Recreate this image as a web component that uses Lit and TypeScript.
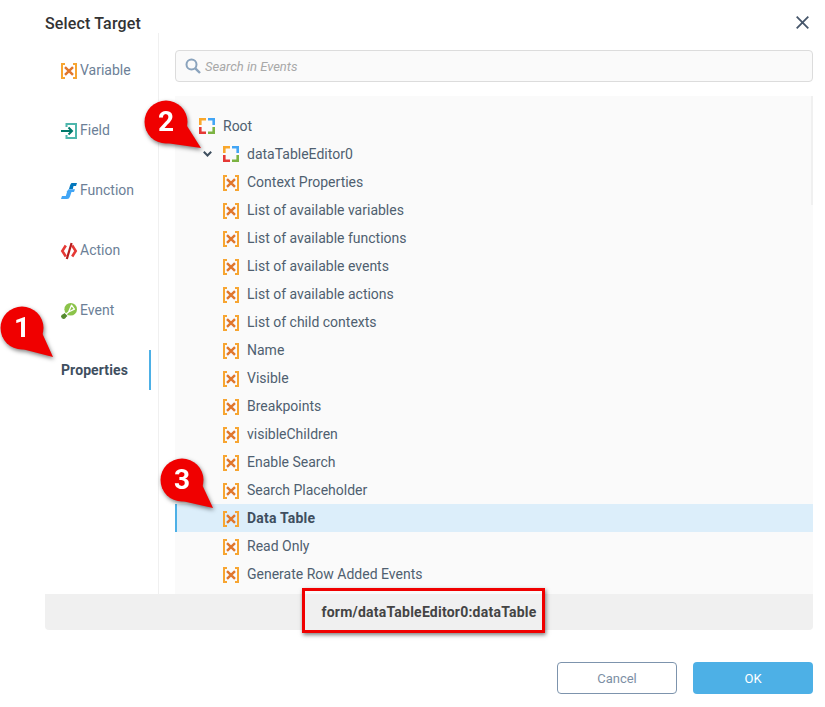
import { LitElement, html, css, svg } from "lit";
import { customElement } from "lit/decorators.js";

const varIcon = svg`<path d="M4 1H1v14h3M12 1h3v14h-3" fill="none" stroke="#f7a531" stroke-width="2"/><path d="M4 4.200l8 7.600M12 4.200l-8 7.600" fill="none" stroke="#e0762c" stroke-width="2.500"/>`;
const ctxIcon = svg`<path d="M0 7V0h7v2.600H2.600V7z" fill="#f9a72b"/><path d="M9 0h7v7h-2.600V2.600H9z" fill="#42a5f5"/><path d="M0 9h2.600v4.400H7V16H0z" fill="#e53935"/><path d="M13.400 9H16v7H9v-2.600h4.400z" fill="#7cb342"/>`;
const fieldIcon = svg`<path d="M5.500 4V1h9.500v14H5.500v-3" fill="none" stroke="#4db6ac" stroke-width="2"/><path d="M0 8h10" stroke="#00796b" stroke-width="2"/><path d="M7.500 4.500L11 8l-3.500 3.500" fill="none" stroke="#00796b" stroke-width="2"/>`;
const fnIcon = svg`<path d="M10.500 0H16l-1 3h-2.500l-.7 3H8l1-3.500Q9.600.6 10.500 0z" fill="#0277bd"/><path d="M7.500 6.200H14L13 9h-2.500L9 13.500Q8.300 16 6 16H0l1-3h3.800L6 9h-.5z" fill="#42a5f5"/>`;
const actIcon = svg`<path d="M4.800 2.500L1.300 8l3.500 5.500" fill="none" stroke="#e53935" stroke-width="2.600"/><path d="M11.200 2.500L14.700 8l-3.500 5.500" fill="none" stroke="#e53935" stroke-width="2.600"/><path d="M10.600 0L5.800 16" stroke="#b71c1c" stroke-width="2.200"/>`;
const evtIcon = svg`<circle cx="9.700" cy="6.300" r="6.300" fill="#8bc34a"/><path d="M10.500 2.200L7.600 9 13.400 6.200zM7.600 9L4.500 11.500" stroke="#fff" stroke-width="1.300" fill="none" stroke-linejoin="round"/><path d="M3.500 10l3 3-3.500 2.800-3-2.500z" fill="#558b2f"/><circle cx="2.600" cy="13.600" r="2.400" fill="#558b2f"/>`;

const tabs = [
  ["Variable", varIcon],
  ["Field", fieldIcon],
  ["Function", fnIcon],
  ["Action", actIcon],
  ["Event", evtIcon],
  ["Properties", null],
] as const;

const rows = [
  "Context Properties",
  "List of available variables",
  "List of available functions",
  "List of available events",
  "List of available actions",
  "List of child contexts",
  "Name",
  "Visible",
  "Breakpoints",
  "visibleChildren",
  "Enable Search",
  "Search Placeholder",
  "Data Table",
  "Read Only",
  "Generate Row Added Events",
];

const icon = (c: unknown, box = "0 -1 16 16") =>
  html`<svg class="icon" width="16" height="16" viewBox="${box}">${c}</svg>`;

const badge = (cls: string, n: string, tail: string) => html`<svg
  class="badge ${cls}"
  width="74"
  height="74"
  viewBox="0 0 74 74"
>
  <path d="${tail}" fill="#f00000" />
  <circle cx="24" cy="24" r="21.500" fill="#f00000" />
  <text x="24" y="33" text-anchor="middle">${n}</text>
</svg>`;

@customElement("app-root")
export class AppRoot extends LitElement {
  static styles = css`
    :host {
      display: block;
      position: relative;
      width: 825px;
      height: 707px;
      overflow: hidden;
      background: #fff;
      font-family: Roboto, "Liberation Sans", sans-serif;
    }
    .dialog {
      display: flex;
      flex-direction: column;
      height: 100%;
      box-sizing: border-box;
      padding: 0 12px 0 45px;
    }
    header {
      height: 33px;
      box-sizing: border-box;
      padding-top: 14px;
      display: flex;
      justify-content: space-between;
      align-items: flex-start;
    }
    h1 {
      margin: 0;
      font-size: 16px;
      line-height: 20px;
      font-weight: 500;
      letter-spacing: 0.15px;
      color: #333;
    }
    .close {
      display: block;
      margin: 2px 4px 0 0;
    }
    .icon {
      flex: none;
      overflow: visible;
    }
    .body {
      display: flex;
      height: 561px;
    }
    .side {
      width: 113px;
      flex: none;
      box-sizing: content-box;
      border-right: 1px solid #f0f0f0;
      padding-top: 17px;
      display: flex;
      flex-direction: column;
      gap: 20px;
    }
    .tab {
      width: 106px;
      height: 40px;
      box-sizing: border-box;
      padding-left: 16px;
      display: flex;
      align-items: center;
      gap: 3px;
      font-size: 14px;
      color: #6c7f97;
    }
    .tab.on {
      font-weight: 700;
      letter-spacing: 0.1px;
      color: #3f4f5f;
      border-right: 2px solid #4db0e6;
    }
    .main {
      flex: 1;
      min-width: 0;
      margin-left: 16px;
      padding-top: 17px;
      display: flex;
      flex-direction: column;
      gap: 14px;
    }
    .search {
      height: 32px;
      flex: none;
      box-sizing: border-box;
      border: 1px solid #dcdcdc;
      border-radius: 4px;
      background: #fafafa;
      display: flex;
      align-items: center;
      gap: 4px;
      padding-left: 9px;
      font-size: 13px;
      font-style: italic;
      color: #a8a8a8;
    }
    .tree {
      flex: 1;
      min-height: 0;
      position: relative;
      overflow: hidden;
      background: #fafafa;
      padding-top: 16px;
      box-sizing: border-box;
    }
    .thumb {
      position: absolute;
      right: 0;
      top: 0;
      width: 2px;
      height: 109px;
      background: #f0f0f0;
    }
    .row {
      height: 28px;
      box-sizing: border-box;
      display: flex;
      align-items: center;
      gap: 8px;
      padding-left: 48px;
      font-size: 14px;
      color: #4f5f70;
    }
    .row.root {
      padding-left: 24px;
    }
    .row.open {
      padding-left: 28px;
      gap: 0;
    }
    .row.open .chev {
      flex: none;
    }
    .row.open .icon {
      margin: 0 8px 0 11px;
    }
    .row.sel {
      background: #dceefa;
      border-left: 2px solid #4db0e6;
      padding-left: 46px;
      font-weight: 700;
      letter-spacing: 0.2px;
      color: #3f4f5f;
    }
    .path {
      height: 36px;
      flex: none;
      background: #f0f0f0;
      border-radius: 0 0 4px 4px;
      display: flex;
      align-items: center;
      justify-content: center;
      font-size: 14px;
      font-weight: 700;
      letter-spacing: 0.23px;
      color: #444;
    }
    .actions {
      margin-top: 32px;
      display: flex;
      justify-content: flex-end;
      gap: 16px;
    }
    button {
      width: 120px;
      height: 32px;
      border-radius: 4px;
      font: 400 13px Roboto, "Liberation Sans", sans-serif;
      padding: 0;
    }
    .cancel {
      background: #fff;
      border: 1px solid #7d94ad;
      color: #7d8fa5;
    }
    .ok {
      background: #4db0e6;
      border: none;
      color: #fff;
    }
    .badge {
      position: absolute;
      overflow: visible;
      filter: drop-shadow(1px 2px 2px rgba(0, 0, 0, 0.5));
    }
    .badge text {
      font: 700 28px Roboto, "Liberation Sans", sans-serif;
      fill: #fff;
    }
    .b1 {
      left: -2px;
      top: 304px;
    }
    .b2 {
      left: 142px;
      top: 98px;
    }
    .b3 {
      left: 158px;
      top: 456px;
    }
    .redbox {
      position: absolute;
      left: 302px;
      top: 588px;
      width: 243px;
      height: 45px;
      box-sizing: border-box;
      border: 3px solid #f00000;
      box-shadow: 1px 2px 4px rgba(0, 0, 0, 0.5);
    }
  `;

  render() {
    return html`
      <div class="dialog">
        <header>
          <h1>Select Target</h1>
          <svg class="close" width="13" height="13" viewBox="0 0 13 13">
            <path d="M.7.7l11.600 11.600M12.300.7L.7 12.300" stroke="#46566a" stroke-width="1.800" fill="none" />
          </svg>
        </header>
        <div class="body">
          <nav class="side">
            ${tabs.map(
              ([label, ic]) => html`<div class="tab ${ic ? "" : "on"}">
                ${ic ? icon(ic) : null}<span>${label}</span>
              </div>`,
            )}
          </nav>
          <div class="main">
            <div class="search">
              <svg width="16" height="16" viewBox="0 0 16 16">
                <circle cx="6.500" cy="6.500" r="5" fill="none" stroke="#8aa3bd" stroke-width="2" />
                <path d="M10.300 10.300L15 15" stroke="#8aa3bd" stroke-width="2.400" />
              </svg>
              <span>Search in Events</span>
            </div>
            <div class="tree">
              <div class="thumb"></div>
              <div class="row root">${icon(ctxIcon, "0 0 16 16")}<span>Root</span></div>
              <div class="row open">
                <svg class="chev" width="9" height="6" viewBox="0 0 9 6">
                  <path d="M.8.8l3.700 3.700L8.200.8" fill="none" stroke="#3f4f5f" stroke-width="2" />
                </svg>
                ${icon(ctxIcon, "0 0 16 16")}<span>dataTableEditor0</span>
              </div>
              ${rows.map(
                (r) => html`<div class="row ${r === "Data Table" ? "sel" : ""}">
                  ${icon(varIcon)}<span>${r}</span>
                </div>`,
              )}
            </div>
          </div>
        </div>
        <div class="path">form/dataTableEditor0:dataTable</div>
        <div class="actions">
          <button class="cancel">Cancel</button>
          <button class="ok">OK</button>
        </div>
      </div>
      ${badge("b1", "1", "M24 45L40 20L55 53z")}
      ${badge("b2", "2", "M24 45L40 20L59 50z")}
      ${badge("b3", "3", "M24 45L40 20L55 52z")}
      <div class="redbox"></div>
    `;
  }
}
